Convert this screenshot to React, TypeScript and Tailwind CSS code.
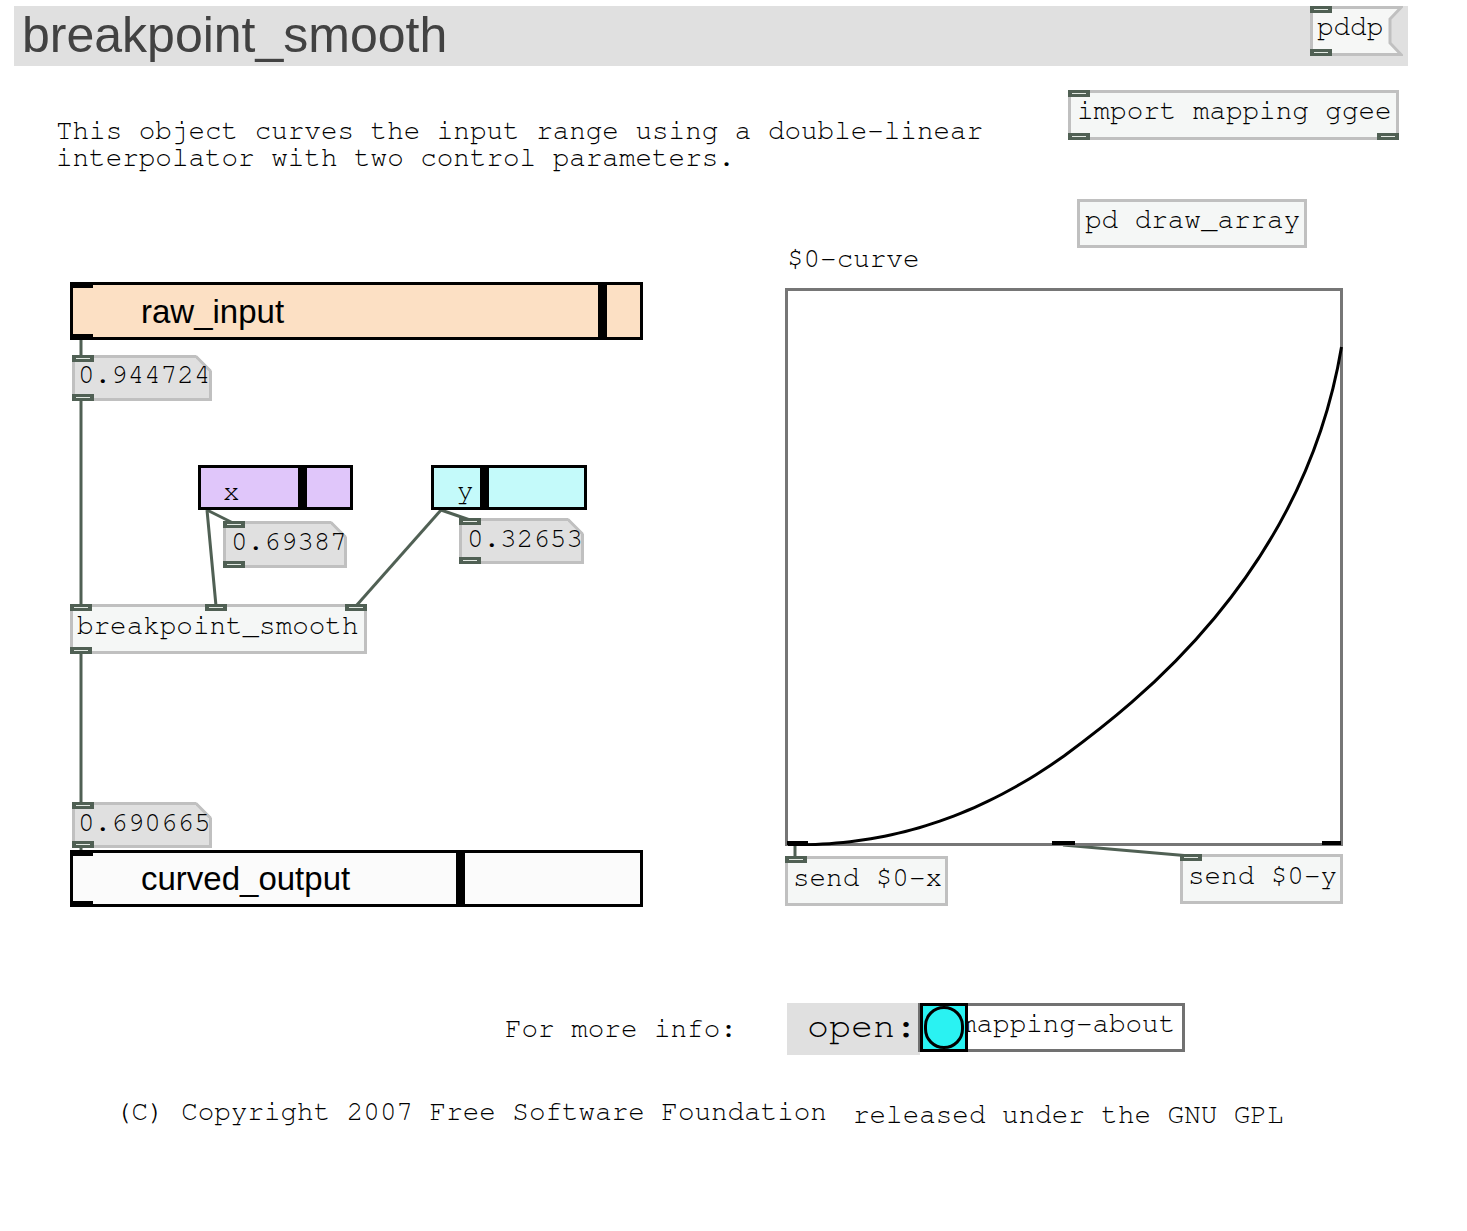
import React from "react";

const Iolet = ({ className }: { className: string }) => (
  <div className={`absolute w-[22px] h-[7px] bg-[#506054] flex items-center justify-center z-10 ${className}`}>
    <div className="w-[14px] h-[1px] bg-[#e4eae4]" />
  </div>
);

const Notch = () => (
  <svg className="absolute -top-[3px] -right-[3px] w-[16px] h-[16px]" viewBox="0 0 16 16">
    <polygon points="0,0 16,0 16,16" fill="#ffffff" />
    <line x1="0" y1="1.5" x2="14.5" y2="16" stroke="#c0c0c0" strokeWidth="3" />
  </svg>
);

function curvePath() {
  const bx = 0.4991;
  const by = 0.1609;
  const toLocal = (X: number, Y: number): [number, number] => [3 + X * 553, 557 - Y * 553];
  const seg1: [number, number][] = [];
  for (let i = 0; i <= 40; i++) {
    const u = i / 40;
    seg1.push(toLocal(u * bx, Math.pow(u, 2.2) * by));
  }
  const d = seg1.map(([x, y], i) => `${i === 0 ? "M" : "L"}${x.toFixed(2)},${y.toFixed(2)}`).join(" ");
  return `${d} C349,416.6 518.5,287 556.5,59`;
}

export default function App() {
  return (
    <div className="relative w-[1467px] h-[1231px] bg-white overflow-hidden font-['FreeMono','Nimbus_Mono_PS','Nimbus_Mono_L','Courier_10_Pitch','Courier_New','Liberation_Mono',monospace] text-[27.6px] leading-[27px] text-black">
      {/* cords */}
      <svg className="absolute left-0 top-0 w-[1467px] h-[1231px] pointer-events-none" viewBox="0 0 1467 1231">
        <g stroke="#506054" strokeWidth="3" fill="none">
          <line x1="81" y1="340" x2="81" y2="357" />
          <line x1="81" y1="400" x2="81" y2="606" />
          <line x1="207" y1="510" x2="233" y2="523" />
          <line x1="207" y1="510" x2="216" y2="606" />
          <line x1="441" y1="510" x2="470" y2="520" />
          <line x1="441" y1="510" x2="356" y2="606" />
          <line x1="81" y1="653" x2="81" y2="804" />
          <line x1="81" y1="847" x2="81" y2="852" />
          <line x1="795" y1="845" x2="795" y2="858" />
          <line x1="1063" y1="845" x2="1190" y2="856" />
        </g>
      </svg>

      {/* title bar */}
      <div className="absolute left-[14px] top-[6px] w-[1394px] h-[60px] bg-[#e0e0e0] pl-[8px] font-['Liberation_Sans',Arial,sans-serif] text-[50px] leading-[58px] text-[#424242]">
        breakpoint_smooth
      </div>

      {/* pddp message */}
      <div className="absolute left-[1310px] top-[6px] w-[93px] h-[50px] pl-[7px] pt-[8px]">
        <svg className="absolute left-0 top-0 w-[93px] h-[50px]" viewBox="0 0 93 50">
          <polygon points="1.5,1.5 91,1.5 80,13 80,37 91,48.5 1.5,48.5" fill="#f6f7f6" stroke="#c0c0c0" strokeWidth="3" />
        </svg>
        <span className="relative">pddp</span>
        <Iolet className="left-0 top-0" />
        <Iolet className="left-0 bottom-0" />
      </div>

      {/* description */}
      <div className="absolute left-[56px] top-[118px] whitespace-pre">
        {"This object curves the input range using a double-linear\ninterpolator with two control parameters."}
      </div>

      {/* import mapping ggee */}
      <div className="absolute left-[1068px] top-[90px] w-[331px] h-[50px] border-[3px] border-[#c0c0c0] bg-[#f5f7f6] pl-[6px] pt-[5px] whitespace-pre">
        import mapping ggee
        <Iolet className="-left-[3px] -top-[3px]" />
        <Iolet className="-left-[3px] -bottom-[3px]" />
        <Iolet className="-right-[3px] -bottom-[3px]" />
      </div>

      {/* pd draw_array */}
      <div className="absolute left-[1077px] top-[199px] w-[230px] h-[49px] border-[3px] border-[#c0c0c0] bg-[#f5f7f6] pl-[5px] pt-[5px] whitespace-pre">
        pd draw_array
      </div>

      {/* graph label */}
      <div className="absolute left-[787px] top-[246px]">$0-curve</div>

      {/* graph */}
      <div className="absolute left-[785px] top-[288px] w-[558px] h-[558px] border-[3px] border-[#767676] bg-white">
        <svg className="absolute -left-[3px] -top-[3px] w-[558px] h-[558px]" viewBox="0 0 558 558">
          <path d={curvePath()} fill="none" stroke="#000" strokeWidth="3" strokeLinejoin="round" />
        </svg>
        <div className="absolute -left-[1px] bottom-[-2px] w-[21px] h-[4px] bg-black" />
        <div className="absolute left-[264px] bottom-[-2px] w-[23px] h-[4px] bg-black" />
        <div className="absolute right-[-1px] bottom-[-2px] w-[19px] h-[4px] bg-black" />
      </div>

      {/* send $0-x */}
      <div className="absolute left-[785px] top-[856px] w-[163px] h-[50px] border-[3px] border-[#c0c0c0] bg-[#f5f7f6] pl-[5px] pt-[6px] whitespace-pre">
        send $0-x
        <Iolet className="-left-[3px] -top-[3px]" />
      </div>

      {/* send $0-y */}
      <div className="absolute left-[1180px] top-[854px] w-[163px] h-[50px] border-[3px] border-[#c0c0c0] bg-[#f5f7f6] pl-[5px] pt-[6px] whitespace-pre">
        send $0-y
        <Iolet className="-left-[3px] -top-[3px]" />
      </div>

      {/* raw_input slider */}
      <div className="absolute left-[70px] top-[282px] w-[573px] h-[58px] border-[3px] border-black bg-[#fce0c4]">
        <div className="absolute left-[525px] top-0 w-[9px] h-full bg-black" />
        <div className="absolute left-[68px] top-[10px] font-['Liberation_Sans',Arial,sans-serif] text-[33px] leading-[33px]">raw_input</div>
        <div className="absolute -left-[3px] -top-[3px] w-[23px] h-[6px] bg-black" />
        <div className="absolute -left-[3px] -bottom-[3px] w-[23px] h-[6px] bg-black" />
      </div>

      {/* 0.944724 */}
      <div className="absolute left-[72px] top-[355px] w-[140px] h-[46px] border-[3px] border-[#c0c0c0] bg-[#e0e0e0] pl-[3px] pt-[4px]">
        <Notch />
        <span className="relative">0.944724</span>
        <Iolet className="-left-[3px] -top-[3px]" />
        <Iolet className="-left-[3px] -bottom-[3px]" />
      </div>

      {/* x slider */}
      <div className="absolute left-[198px] top-[465px] w-[155px] h-[45px] border-[3px] border-black bg-[#e0c6fa]">
        <div className="absolute left-[97px] top-0 w-[9px] h-full bg-black" />
        <div className="absolute left-[22px] top-[11px]">x</div>
      </div>

      {/* y slider */}
      <div className="absolute left-[431px] top-[465px] w-[156px] h-[45px] border-[3px] border-black bg-[#c4fafa]">
        <div className="absolute left-[46px] top-0 w-[9px] h-full bg-black" />
        <div className="absolute left-[23px] top-[10px]">y</div>
      </div>

      {/* 0.69387 */}
      <div className="absolute left-[223px] top-[521px] w-[124px] h-[47px] border-[3px] border-[#c0c0c0] bg-[#e0e0e0] pl-[5px] pt-[5px]">
        <Notch />
        <span className="relative">0.69387</span>
        <Iolet className="-left-[3px] -top-[3px]" />
        <Iolet className="-left-[3px] -bottom-[3px]" />
      </div>

      {/* 0.32653 */}
      <div className="absolute left-[459px] top-[518px] w-[125px] h-[46px] border-[3px] border-[#c0c0c0] bg-[#e0e0e0] pl-[5px] pt-[5px]">
        <Notch />
        <span className="relative">0.32653</span>
        <Iolet className="-left-[3px] -top-[3px]" />
        <Iolet className="-left-[3px] -bottom-[3px]" />
      </div>

      {/* breakpoint_smooth object */}
      <div className="absolute left-[70px] top-[604px] w-[297px] h-[50px] border-[3px] border-[#c0c0c0] bg-[#f5f7f6] pl-[4px] pt-[6px]">
        breakpoint_smooth
        <Iolet className="-left-[3px] -top-[3px]" />
        <Iolet className="left-[132px] -top-[3px]" />
        <Iolet className="-right-[3px] -top-[3px]" />
        <Iolet className="-left-[3px] -bottom-[3px]" />
      </div>

      {/* 0.690665 */}
      <div className="absolute left-[72px] top-[802px] w-[140px] h-[46px] border-[3px] border-[#c0c0c0] bg-[#e0e0e0] pl-[3px] pt-[5px]">
        <Notch />
        <span className="relative">0.690665</span>
        <Iolet className="-left-[3px] -top-[3px]" />
        <Iolet className="-left-[3px] -bottom-[3px]" />
      </div>

      {/* curved_output slider */}
      <div className="absolute left-[70px] top-[850px] w-[573px] h-[57px] border-[3px] border-black bg-[#fbfbfb]">
        <div className="absolute left-[383px] top-0 w-[9px] h-full bg-black" />
        <div className="absolute left-[68px] top-[9px] font-['Liberation_Sans',Arial,sans-serif] text-[33px] leading-[33px]">curved_output</div>
        <div className="absolute -left-[3px] -top-[3px] w-[23px] h-[6px] bg-black" />
        <div className="absolute -left-[3px] -bottom-[3px] w-[23px] h-[6px] bg-black" />
      </div>

      {/* footer */}
      <div className="absolute left-[505px] top-[1016px] whitespace-pre">For more info:</div>

      <div className="absolute left-[787px] top-[1003px] w-[133px] h-[52px] bg-[#e0e0e0] pl-[20px] pt-[5px] text-[36.7px] leading-[37px]">
        open:
      </div>

      <div className="absolute left-[918px] top-[1003px] w-[267px] h-[49px] border-[3px] border-[#717171] bg-white pl-[39px] pt-[5px] whitespace-pre">
        mapping-about
      </div>

      <div className="absolute left-[920px] top-[1003px] w-[48px] h-[49px] border-[3px] border-black bg-[#2af2f2]">
        <div className="absolute left-[1px] top-0 w-[40px] h-[43px] rounded-full border-[3px] border-black bg-[#2af2f2]" />
      </div>

      <div className="absolute left-[115px] top-[1099px] whitespace-pre">
        (C) Copyright 2007 Free Software Foundation
      </div>
      <div className="absolute left-[853px] top-[1102px] whitespace-pre">released under the GNU GPL</div>
    </div>
  );
}
